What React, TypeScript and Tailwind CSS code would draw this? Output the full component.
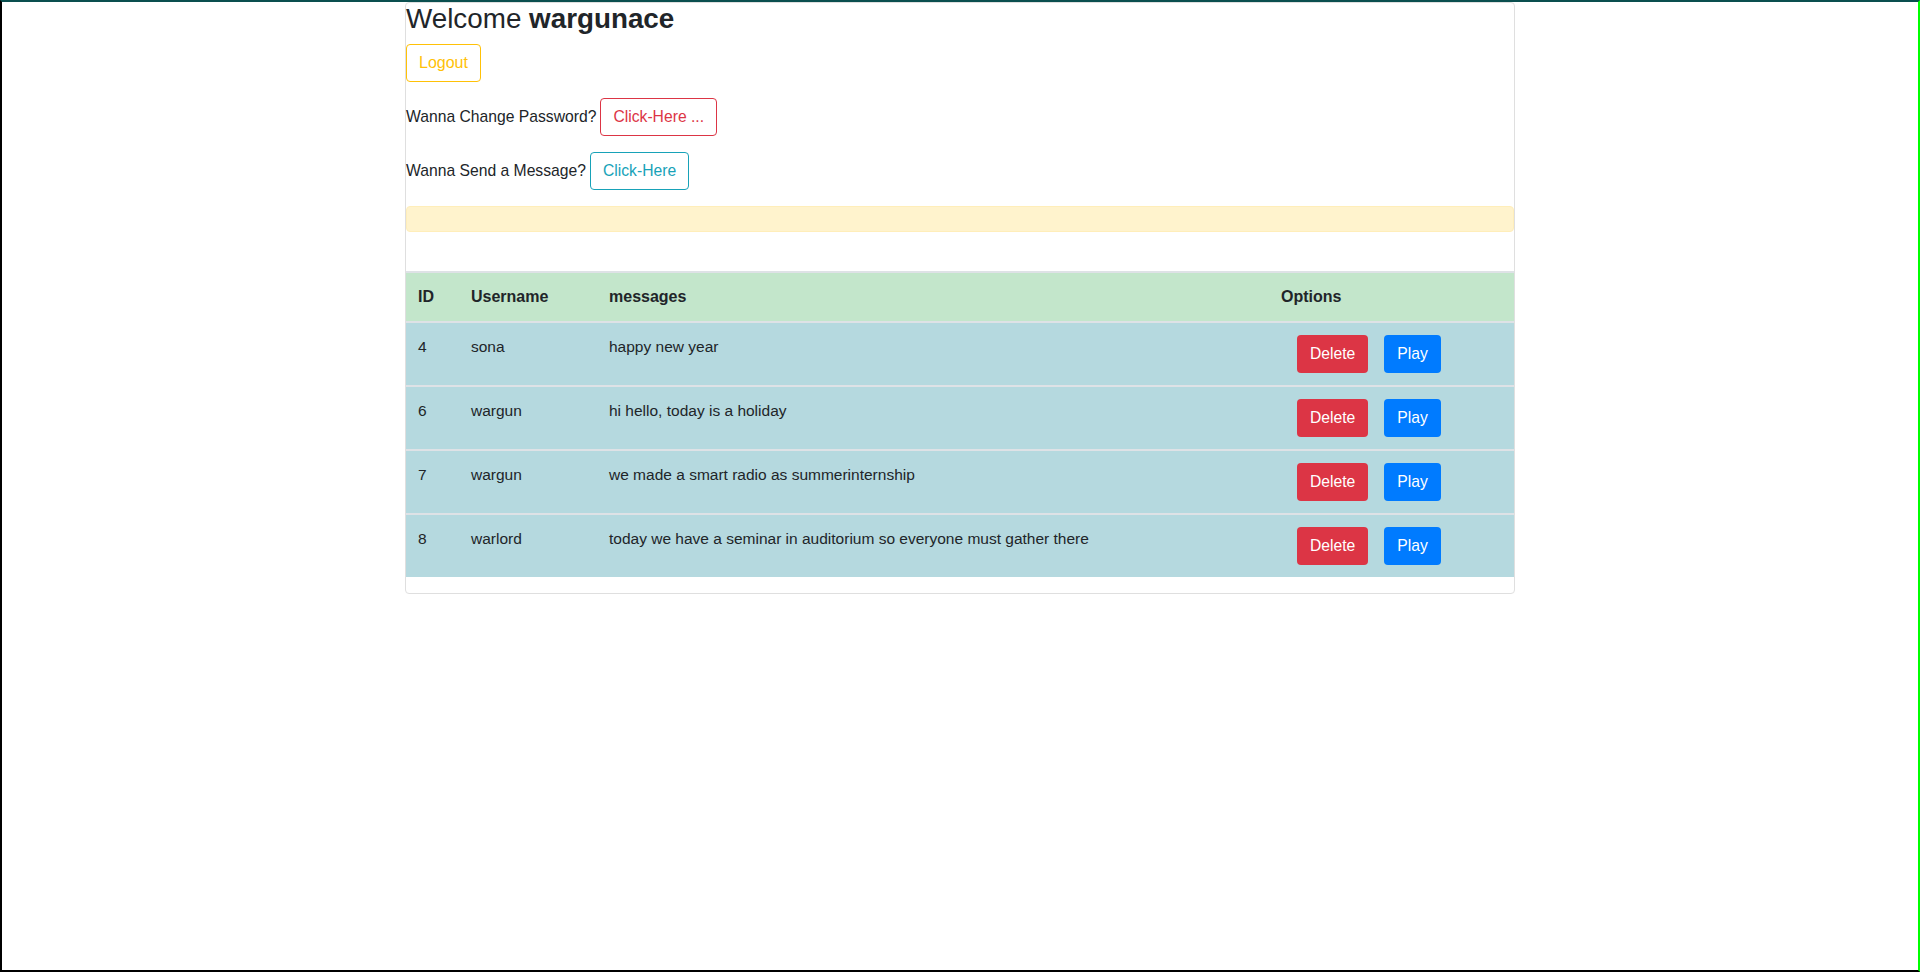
import React from "react";

const rows = [
  { id: 4, user: "sona", msg: "happy new year" },
  { id: 6, user: "wargun", msg: "hi hello, today is a holiday" },
  { id: 7, user: "wargun", msg: "we made a smart radio as summerinternship" },
  { id: 8, user: "warlord", msg: "today we have a seminar in auditorium so everyone must gather there" },
];

export default function App() {
  return (
    <div
      className="h-[972px] w-full bg-white border-t-2 border-l-2 border-b-2 border-r-2 border-t-[#0a4f4f] border-l-black border-b-black border-r-[#00ff00] text-[#212529] text-base leading-6"
      style={{ fontFamily: '"Liberation Sans", Arial, Helvetica, sans-serif' }}
    >
      <div className="mx-auto w-[1110px] border border-[#dfdfdf] rounded-[4px]">
        <h3 className="text-[27.8px] leading-[33.6px] font-normal mb-2 -mt-[1px]">
          Welcome <b className="font-bold">wargunace</b>
        </h3>
        <button className="h-[38px] px-3 border border-[#ffc107] text-[#ffc107] rounded-[4px] bg-white">
          Logout
        </button>
        <div className="mt-4 flex items-center gap-[4px]">
          <span className="text-[15.7px]">Wanna Change Password?</span>
          <button className="h-[38px] px-3 border border-[#dc3545] text-[#dc3545] rounded-[4px] bg-white text-[15.7px]">
            Click-Here ...
          </button>
        </div>
        <div className="mt-4 flex items-center gap-[4px]">
          <span className="text-[15.7px]">Wanna Send a Message?</span>
          <button className="h-[38px] px-3 border border-[#17a2b8] text-[#17a2b8] rounded-[4px] bg-white text-[15.7px]">
            Click-Here
          </button>
        </div>
        <div className="mt-4 h-[26px] bg-[#fff3cd] border border-[#ffeeba] rounded-[4px]" />
        <div className="h-[39px]" />
        <table className="w-full border-collapse mb-4 text-[15.5px]">
          <thead>
            <tr className="bg-[#c3e6cb] border-t-2 border-[#dee2e6] text-base">
              <th className="w-[53px] text-left font-bold px-3 py-3 border-b-2 border-[#dee2e6]">ID</th>
              <th className="w-[138px] text-left font-bold px-3 py-3 border-b-2 border-[#dee2e6]">Username</th>
              <th className="w-[672px] text-left font-bold px-3 py-3 border-b-2 border-[#dee2e6]">messages</th>
              <th className="text-left font-bold px-3 py-3 border-b-2 border-[#dee2e6]">Options</th>
            </tr>
          </thead>
          <tbody>
            {rows.map((r, i) => (
              <tr key={r.id} className={"bg-[#b5d9df] " + (i === 0 ? "" : "border-t-2 border-[#dee2e6]")}>
                <td className="align-top px-3 py-3">{r.id}</td>
                <td className="align-top px-3 py-3">{r.user}</td>
                <td className="align-top px-3 py-3">{r.msg}</td>
                <td className="align-top px-3 py-3">
                  <div className="flex text-[15.7px]">
                    <button className="ml-4 h-[38px] px-3 border border-transparent rounded-[4px] bg-[#dc3545] text-white">Delete</button>
                    <button className="ml-4 h-[38px] px-3 border border-transparent rounded-[4px] bg-[#007bff] text-white">Play</button>
                  </div>
                </td>
              </tr>
            ))}
          </tbody>
        </table>
      </div>
    </div>
  );
}
